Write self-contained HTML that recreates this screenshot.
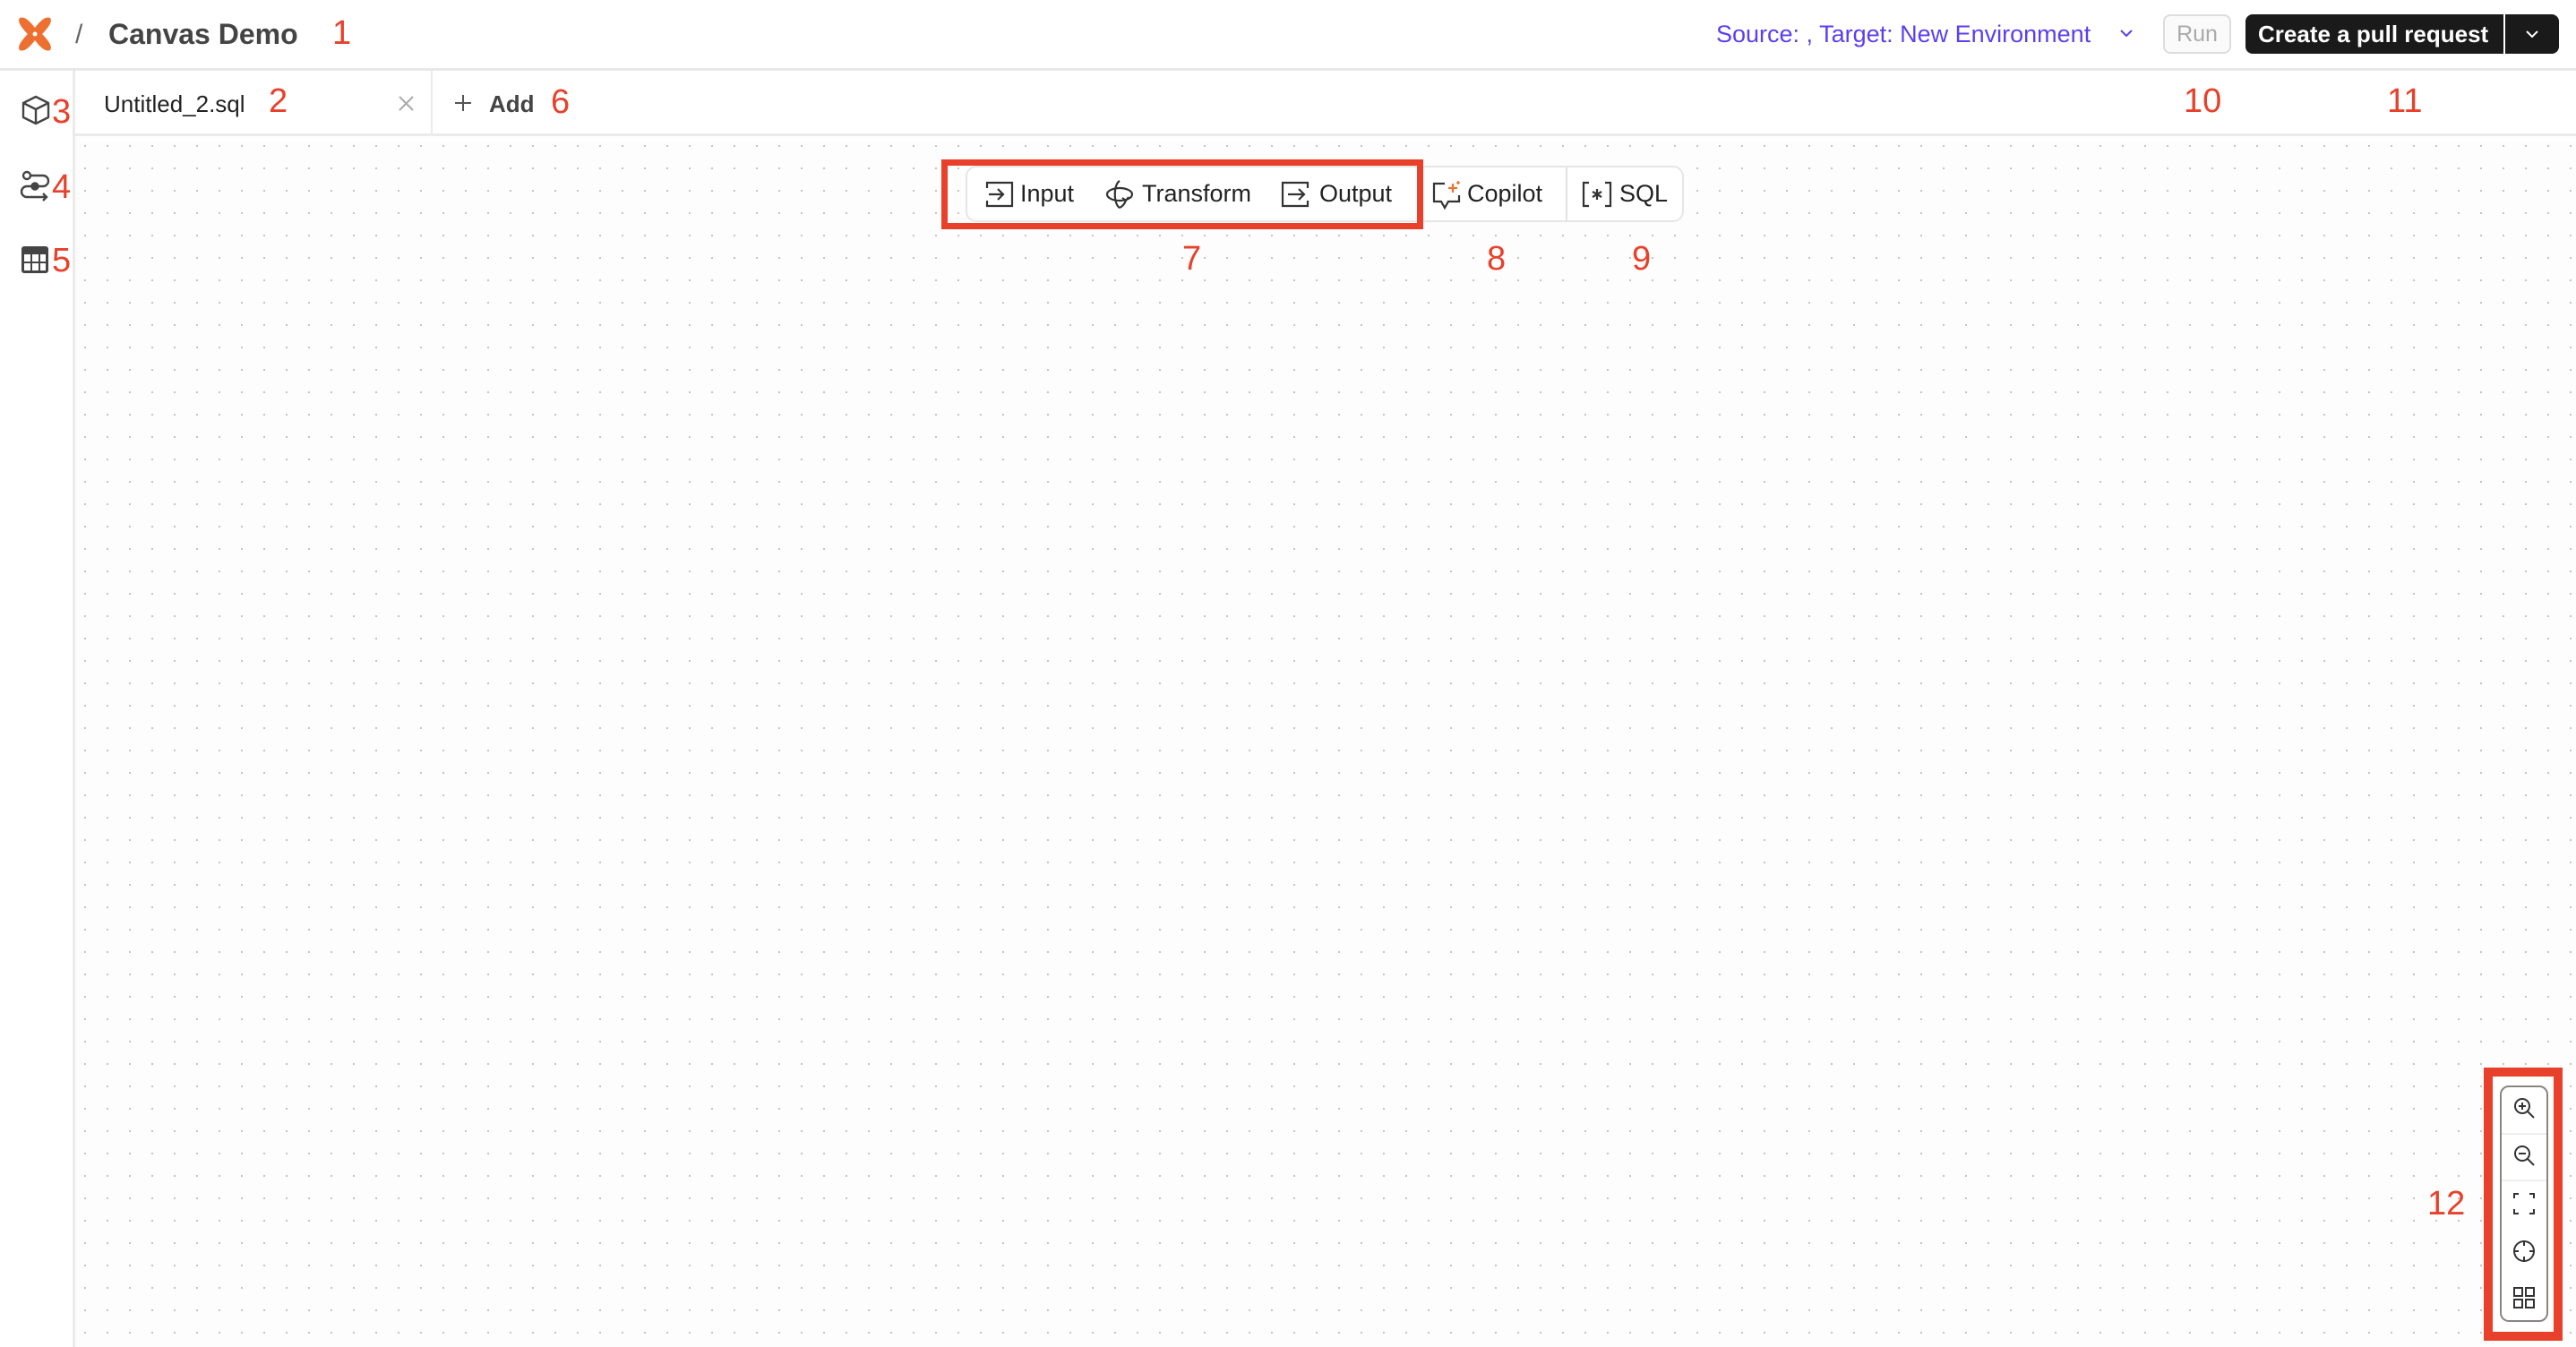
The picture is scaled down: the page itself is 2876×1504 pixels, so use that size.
<!DOCTYPE html>
<html><head><meta charset="utf-8">
<style>
*{box-sizing:border-box;margin:0;padding:0}
body{width:2876px;height:1504px;overflow:hidden;background:#fcfcfc;font-family:"Liberation Sans",sans-serif;position:relative;color:#222}
.abs{position:absolute}
.red{position:absolute;color:#e8402a;font-size:38px;line-height:1}
#hdr{left:0;top:0;width:2876px;height:79px;background:#fff;border-bottom:3px solid #e8e8e8}
#side{left:0;top:79px;width:84px;height:1425px;background:#fff;border-right:3px solid #ebebeb}
#tabs{left:84px;top:79px;width:2792px;height:73px;background:#fff;border-bottom:3px solid #ebebeb}
#canvas{left:87px;top:152px;width:2789px;height:1352px;background-color:#fdfdfd;background-image:radial-gradient(circle,#bbb 0.9px,transparent 1.2px);background-size:25px 25px;background-position:-4.5px -1.5px}
.tb{font-size:27px;color:#222;line-height:1}
svg{position:absolute;overflow:visible}
</style></head><body>
<div id="canvas" class="abs"></div>
<div id="hdr" class="abs"></div>
<div id="side" class="abs"></div>
<div id="tabs" class="abs"></div>

<svg style="left:18px;top:18px" width="42" height="40" viewBox="0 0 42 40">
<path d="M4 2 C9 0 14 4 21 13 C28 4 33 0 38 2 C41 6 36 13 29 20 C36 27 41 34 38 38 C33 40 28 36 21 27 C14 36 9 40 4 38 C1 34 6 27 13 20 C6 13 1 6 4 2Z" fill="#ee7031"/>
<circle cx="21" cy="20" r="2.5" fill="#fff"/>
</svg>
<div class="abs" style="left:84px;top:22px;font-size:30px;color:#666">/</div>
<div class="abs" style="left:121px;top:20px;font-size:32px;font-weight:bold;color:#444">Canvas Demo</div>
<div class="red" style="left:371px;top:18px">1</div>

<div class="abs" style="left:1916px;top:23px;font-size:27px;color:#5b3ff0">Source: , Target: New Environment</div>
<svg style="left:2367px;top:32px" width="14" height="10"><path d="M1 2 L7 8 L13 2" stroke="#5b3ff0" stroke-width="2" fill="none"/></svg>
<div class="abs" style="left:2415px;top:16px;width:76px;height:44px;border:2px solid #ddd;border-radius:8px;background:#fafafa;color:#aaa;font-size:25px;text-align:center;line-height:40px">Run</div>
<div class="abs" style="left:2507px;top:16px;width:350px;height:44px;border-radius:8px;background:#1a1a1a;color:#fff;font-size:26px;line-height:44px;padding-left:14px;font-weight:bold">Create a pull request</div>
<div class="abs" style="left:2795px;top:16px;width:2px;height:44px;background:#fff"></div>
<svg style="left:2820px;top:33px" width="14" height="10"><path d="M1 2 L7 8 L13 2" stroke="#fff" stroke-width="2" fill="none"/></svg>

<svg style="left:24px;top:106px" width="32" height="34" viewBox="0 0 32 34" fill="none" stroke="#444" stroke-width="2.4" stroke-linejoin="round"><path d="M16 2 L30 9 L30 25 L16 32 L2 25 L2 9Z M2 9 L16 16 L30 9 M16 16 L16 32"/></svg>
<div class="red" style="left:58px;top:106px">3</div>
<svg style="left:22px;top:191px" width="34" height="32" viewBox="0 0 34 32" fill="none" stroke="#444" stroke-width="2.4"><circle cx="8" cy="5" r="4"/><path d="M12 5 H26 A6 6 0 0 1 26 17 H8 A6 6 0 0 0 8 29 H30 M26 25 L30 29 L26 33"/><circle cx="17" cy="17" r="3.5" fill="#444"/></svg>
<div class="red" style="left:58px;top:190px">4</div>
<svg style="left:23px;top:274px" width="32" height="32" viewBox="0 0 32 32"><rect x="1" y="1" width="30" height="30" rx="3" fill="#444"/><g fill="#fff"><rect x="4" y="10" width="7" height="8"/><rect x="13" y="10" width="7" height="8"/><rect x="22" y="10" width="6" height="8"/><rect x="4" y="20" width="7" height="8"/><rect x="13" y="20" width="7" height="8"/><rect x="22" y="20" width="6" height="8"/></g></svg>
<div class="red" style="left:58px;top:272px">5</div>

<div class="abs" style="left:116px;top:101px;font-size:26px;color:#222">Untitled_2.sql</div>
<div class="red" style="left:300px;top:94px">2</div>
<svg style="left:445px;top:107px" width="17" height="17"><path d="M1 1 L16 16 M16 1 L1 16" stroke="#aaa" stroke-width="2"/></svg>
<div class="abs" style="left:481px;top:79px;width:2px;height:73px;background:#ebebeb"></div>
<svg style="left:507px;top:105px" width="20" height="20"><path d="M10 1 V19 M1 10 H19" stroke="#555" stroke-width="2"/></svg>
<div class="abs" style="left:546px;top:101px;font-size:26px;color:#444;font-weight:bold">Add</div>
<div class="red" style="left:615px;top:95px">6</div>
<div class="red" style="left:2438px;top:94px">10</div>
<div class="red" style="left:2665px;top:94px">11</div>

<div class="abs" style="left:1078px;top:185px;width:802px;height:63px;background:#fff;border:2px solid #e6e6e6;border-radius:12px"></div>
<div class="abs" style="left:1748px;top:186px;width:2px;height:61px;background:#e3e3e3"></div>
<div class="abs" style="left:1051px;top:178px;width:538px;height:78px;border:7px solid #e8402a"></div>
<svg style="left:1100px;top:202px" width="32" height="30" viewBox="0 0 32 30" fill="none" stroke="#333" stroke-width="2.2"><path d="M2 8 V2 H30 V28 H2 V22 M4 15 H20 M14 9 L20 15 L14 21"/></svg>
<div class="abs tb" style="left:1139px;top:203px">Input</div>
<svg style="left:1233px;top:200px" width="34" height="34" viewBox="0 0 34 34" fill="none" stroke="#333" stroke-width="2.2"><ellipse cx="17" cy="17" rx="14" ry="7"/><path d="M17 2 C10 6 10 28 17 32 M17 32 C21 30 24 26 24 22 M20 21 L24 24 L27 20"/></svg>
<div class="abs tb" style="left:1275px;top:203px">Transform</div>
<svg style="left:1430px;top:202px" width="32" height="30" viewBox="0 0 32 30" fill="none" stroke="#333" stroke-width="2.2"><path d="M30 8 V2 H2 V28 H30 V22 M8 15 H26 M20 9 L26 15 L20 21"/></svg>
<div class="abs tb" style="left:1473px;top:203px">Output</div>
<svg style="left:1599px;top:201px" width="34" height="34" viewBox="0 0 34 34" fill="none" stroke="#333" stroke-width="2.2"><path d="M14 4 H2 V24 H10 L14 31 L18 24 H30 V17"/><path d="M23 4 V14 M18 9 H28" stroke="#ee7031"/><path d="M29 1 V5 M27 3 H31" stroke="#ee7031" stroke-width="1.6"/></svg>
<div class="abs tb" style="left:1638px;top:203px">Copilot</div>
<svg style="left:1766px;top:202px" width="34" height="30" viewBox="0 0 34 30" fill="none" stroke="#333" stroke-width="2.2"><path d="M8 2 H2 V28 H8 M26 2 H32 V28 H26 M17 9 V21 M12 12 L22 18 M22 12 L12 18"/></svg>
<div class="abs tb" style="left:1808px;top:203px">SQL</div>
<div class="red" style="left:1320px;top:270px">7</div>
<div class="red" style="left:1660px;top:270px">8</div>
<div class="red" style="left:1822px;top:270px">9</div>

<div class="abs" style="left:2773px;top:1192px;width:88px;height:305px;border:10px solid #e8402a;background:#fff"></div>
<div class="abs" style="left:2791px;top:1212px;width:54px;height:264px;border:2px solid #8a8580;border-radius:10px;background:#fff"></div>
<div class="abs" style="left:2793px;top:1265px;width:50px;height:2px;background:#eee"></div>
<div class="abs" style="left:2793px;top:1317px;width:50px;height:2px;background:#eee"></div>
<svg style="left:2806px;top:1225px" width="26" height="26" viewBox="0 0 26 26" fill="none" stroke="#333" stroke-width="2"><circle cx="10" cy="10" r="8"/><path d="M16 16 L23 23 M10 6 V14 M6 10 H14"/></svg>
<svg style="left:2806px;top:1278px" width="26" height="26" viewBox="0 0 26 26" fill="none" stroke="#333" stroke-width="2"><circle cx="10" cy="10" r="8"/><path d="M16 16 L23 23 M6 10 H14"/></svg>
<svg style="left:2806px;top:1332px" width="24" height="24" viewBox="0 0 24 24" fill="none" stroke="#333" stroke-width="2"><path d="M1 6 V1 H6 M18 1 H23 V6 M23 18 V23 H18 M6 23 H1 V18"/></svg>
<svg style="left:2805px;top:1384px" width="26" height="26" viewBox="0 0 26 26" fill="none" stroke="#333" stroke-width="2"><circle cx="13" cy="13" r="11"/><path d="M13 1 V7 M13 19 V25 M1 13 H7 M19 13 H25"/></svg>
<svg style="left:2806px;top:1437px" width="24" height="24" viewBox="0 0 24 24" fill="none" stroke="#333" stroke-width="2"><rect x="1" y="1" width="9" height="9"/><rect x="14" y="1" width="9" height="9"/><rect x="1" y="14" width="9" height="9"/><rect x="14" y="14" width="9" height="9"/></svg>
<div class="red" style="left:2710px;top:1325px">12</div>
</body></html>
